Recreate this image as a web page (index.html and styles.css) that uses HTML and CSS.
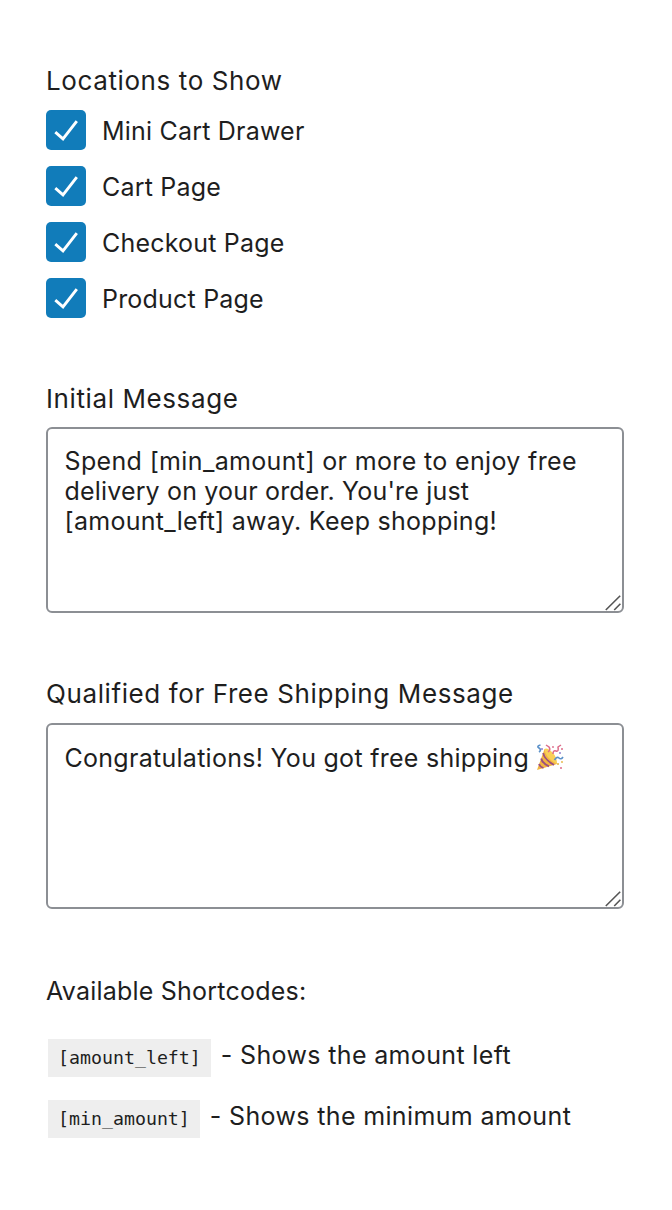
FILE: index.html
```
<!DOCTYPE html>
<html lang="en">
<head>
<meta charset="utf-8">
<title>Free Shipping Settings</title>
<link rel="stylesheet" href="styles.css">
</head>
<body>
<main class="settings">
  <section class="locations">
    <h2 class="label">Locations to Show</h2>
    <label class="option"><span class="box"><svg viewBox="0 0 40 40"><path d="M9.3 22.2L17 28.9L30.8 11.2"/></svg></span><span class="name">Mini Cart Drawer</span></label>
    <label class="option"><span class="box"><svg viewBox="0 0 40 40"><path d="M9.3 22.2L17 28.9L30.8 11.2"/></svg></span><span class="name">Cart Page</span></label>
    <label class="option"><span class="box"><svg viewBox="0 0 40 40"><path d="M9.3 22.2L17 28.9L30.8 11.2"/></svg></span><span class="name">Checkout Page</span></label>
    <label class="option"><span class="box"><svg viewBox="0 0 40 40"><path d="M9.3 22.2L17 28.9L30.8 11.2"/></svg></span><span class="name">Product Page</span></label>
  </section>
  <section class="field initial">
    <h2 class="label">Initial Message</h2>
    <div class="area"><span class="line-wide">Spend [min_amount] or more to enjoy free</span><br><span class="line-tight">delivery on your order. You're just</span><br><span class="line-mid">[amount_left] away. Keep shopping!</span>
      <svg class="grip" viewBox="0 0 16 16"><path d="M.8 15L15.2 .8M9.2 15L15.4 8.8"/></svg></div>
  </section>
  <section class="field qualified">
    <h2 class="label">Qualified for Free Shipping Message</h2>
    <div class="area"><span class="line-mid">Congratulations! You got free shipping</span><svg class="party" viewBox="0 0 28 28">
        <path d="M1 26L8.5 5Q16 9 21 20Z" fill="#f3b640"/>
        <path d="M8.5 5Q9 14 21 20Q21 13 16.5 8.5Q11 3 8.5 5Z" fill="#f9cf58"/>
        <path d="M7.2 9Q8 15 18 21M5.2 14.5Q6 19 13 22.4M3 20Q4 23 7.5 24" fill="none" stroke="#9c5080" stroke-width="1.8"/>
        <path d="M4.5 1Q0 2 3 4T3 8M18.5 16Q21 12 23 14T27 13" fill="none" stroke="#5b91c9" stroke-width="1.6"/>
        <path d="M12 8Q15 6 13 3L10 1M17 10Q17 6 20 7T22 3L25 1" fill="none" stroke="#dd6b88" stroke-width="1.5"/>
        <g fill="#dd6b88"><circle cx="17" cy="3" r=".9"/><circle cx="26" cy="5" r="1"/><circle cx="25" cy="24" r="1"/></g>
        <g fill="#8a75c9"><circle cx="6" cy="5" r=".9"/><circle cx="24" cy="9" r=".9"/></g>
        <g fill="#e5b43c"><circle cx="22" cy="20" r="1"/><circle cx="26" cy="18" r=".9"/></g>
      </svg>
      <svg class="grip" viewBox="0 0 16 16"><path d="M.8 15L15.2 .8M9.2 15L15.4 8.8"/></svg></div>
  </section>
  <section class="codes">
    <h2 class="subhead">Available Shortcodes:</h2>
    <p class="code-row"><code>[amount_left]</code><span class="line-wide">- Shows the amount left</span></p>
    <p class="code-row"><code>[min_amount]</code><span class="line-wide">- Shows the minimum amount</span></p>
  </section>
</main>
</body>
</html>
```
FILE: styles.css
```
* { box-sizing: border-box; }
body { margin: 0; background: #fff; color: #1e1e1e; font: 400 25px/30px Inter, sans-serif; }
.settings { padding: 66px 48px 0 46px; }
.label { margin: 0; font-size: 26px; font-weight: inherit; line-height: 30px; letter-spacing: .6px; }
.locations { display: flex; flex-direction: column; gap: 16px; }
.locations .label { margin-bottom: -2px; }
.option { display: flex; align-items: center; gap: 16px; height: 40px; letter-spacing: .2px; }
.name { padding-top: 2px; }
.box { width: 40px; height: 40px; border-radius: 5px; background: #117cba; }
.box svg { display: block; fill: none; stroke: #fff; stroke-width: 2.9; }
.field { margin-top: 66px; }
.area { position: relative; height: 186px; margin-top: 13px; padding: 17px 17px 17px 16.5px; border: 2px solid #8c8f94; border-radius: 6px; white-space: nowrap; }
.qualified .area { margin-top: 14px; padding-top: 18px; }
.line-wide { letter-spacing: .35px; }
.line-tight { letter-spacing: .17px; }
.line-mid { letter-spacing: .28px; }
.party { width: 28px; height: 28px; margin-left: 7px; vertical-align: -5px; }
.grip { position: absolute; right: 1px; bottom: 0; width: 16px; height: 16px; fill: none; stroke: #555; stroke-width: 1.6; }
.codes { margin-top: 67px; }
.subhead { margin: 0 0 33px; font-size: 25px; font-weight: inherit; line-height: 30px; letter-spacing: .22px; }
.code-row { display: flex; align-items: center; gap: 10px; margin: 0 0 23px 2px; height: 38px; }
.code-row span { padding-bottom: 6px; }
code { padding: 4px 10px; background: #eee; font: 18.25px/30px "DejaVu Sans Mono", monospace; }
```
